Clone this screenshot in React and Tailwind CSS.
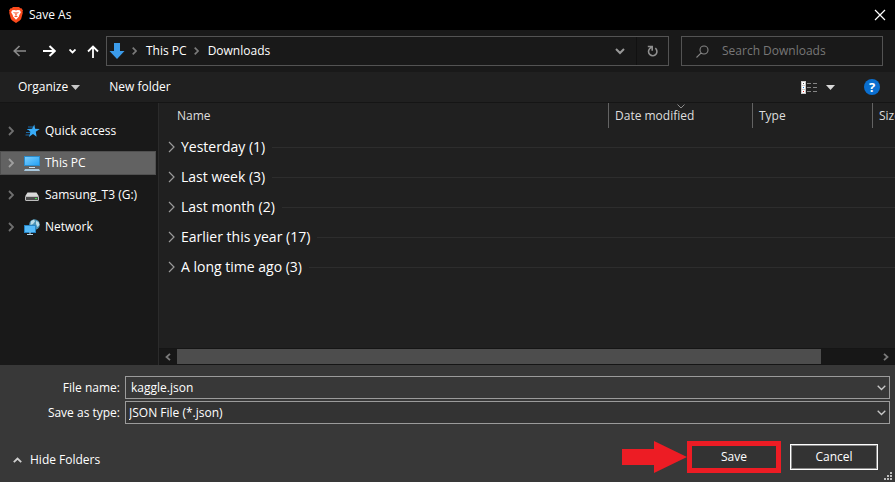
import React from "react";

function Stroke({ d, w = 12, h = 12, sw = 1.5, className = "" }) {
  return (
    <svg width={w} height={h} viewBox={`0 0 ${w} ${h}`} fill="none" stroke="currentColor" strokeWidth={sw} className={`shrink-0 ${className}`} aria-hidden="true">
      <path d={d} />
    </svg>
  );
}

function BraveLogo() {
  return (
    <svg width="14" height="16" viewBox="0 0 14 16" className="shrink-0" aria-hidden="true">
      <path d="M4 0h6l1.3 1.3 1.2-.1L14 3.4l-.5 1.3.3 1.1-1.7 6.2-1.3 1.6L7 16l-3.800-2.400L1.900 12 .2 5.800l.3-1.100L0 3.400l1.500-2.200 1.200.1z" fill="#fb4a1c" />
      <path d="M3.200 3.200l2-.3L7 3.400l1.800-.5 2 .3 1.100 2.100-1.700 3-.2 1.100L7 12.700 4 9.400l-.2-1.100-1.700-3z" fill="#fff" />
      <path d="M4 5l2 .6-.5 1.200zM10 5l-2 .6.500 1.200zM6.500 5h1l.2 2.800L7 8.500l-.7-.7zM5 9.200l2-.6 2 .6-2 1z" fill="#fb4a1c" />
    </svg>
  );
}

function DownloadsIcon() {
  return (
    <svg width="16" height="16" viewBox="0 0 16 16" className="shrink-0" aria-hidden="true">
      <path d="M5 0h6v8h4.500L8 16 .5 8H5z" fill="#3b9bea" />
    </svg>
  );
}

function StarIcon() {
  return (
    <svg width="16" height="16" viewBox="0 0 16 16" className="shrink-0" aria-hidden="true">
      <path d="M4 4h5M3 6.500h5M2 9.500h5M1.500 12h4" stroke="#1a6aa8" />
      <path d="M10.300 1.500l.8 4.300 4.700.2-4 2.700.8 5-3.600-2.800-4.200 3 1.700-4.900L3.500 6l4.600-.2z" fill="#38acf8" />
    </svg>
  );
}

function PcIcon() {
  return (
    <svg width="16" height="16" viewBox="0 0 16 16" className="shrink-0" aria-hidden="true">
      <defs>
        <linearGradient id="pcScreen" x1="0" y1="0" x2="1" y2="1">
          <stop offset="0" stopColor="#7fd0ff" />
          <stop offset="1" stopColor="#22a1f5" />
        </linearGradient>
      </defs>
      <rect x=".5" y="1.500" width="15" height="9" fill="url(#pcScreen)" stroke="#2b8ccc" />
      <path d="M5 12.500h6" stroke="#c9dce8" />
      <path d="M1 14h14l1 2H0z" fill="#a8c9df" />
    </svg>
  );
}

function DriveIcon() {
  return (
    <svg width="16" height="16" viewBox="0 0 16 16" className="shrink-0" aria-hidden="true">
      <path d="M3.500 5.500h9L15 9.500H1z" fill="#d9d9d9" />
      <rect x="1.500" y="9.500" width="13" height="4" rx=".5" fill="#4d4d4d" stroke="#bdbdbd" />
      <rect x="11" y="11" width="2" height="1" fill="#3fe04a" />
    </svg>
  );
}

function NetworkIcon() {
  return (
    <svg width="16" height="16" viewBox="0 0 16 16" className="shrink-0" aria-hidden="true">
      <circle cx="10.500" cy="5.500" r="5.300" fill="#4b93b5" />
      <path d="M7 2l3-1.500 1 2L9 5 6.500 6zM12 2l2.500 1L15.500 6l-2 2-1.500-3z" fill="#b9dce8" />
      <rect x=".5" y="6.500" width="11" height="7" fill="#55bbfa" stroke="#2684c4" />
      <path d="M6 13v2M3 15.500h6" stroke="#b5d3e5" />
    </svg>
  );
}

function ViewIcon() {
  return (
    <svg width="17" height="13" viewBox="0 0 17 13" className="shrink-0" aria-hidden="true">
      <path d="M0 0h5v13H0z" fill="#c9c9c9" />
      <path d="M1 1h3v3H1zM1 5h3v3H1zM1 9h3v3H1z" fill="#fff" />
      <path d="M2 2h1v1H2z" fill="#555" />
      <path d="M2 6h1v1H2z" fill="#1683e0" />
      <path d="M2 10h1v1H2z" fill="#d22" />
      <path d="M6 2.500h4M12 2.500h4M6 6.500h4M12 6.500h4M6 10.500h4M12 10.500h4" stroke="#858585" />
    </svg>
  );
}

const places = [
  { name: "Quick access", icon: <StarIcon /> },
  { name: "This PC", icon: <PcIcon />, selected: true },
  { name: "Samsung_T3 (G:)", icon: <DriveIcon /> },
  { name: "Network", icon: <NetworkIcon /> },
];

const groups = ["Yesterday (1)", "Last week (3)", "Last month (2)", "Earlier this year (17)", "A long time ago (3)"];

function TitleBar() {
  return (
    <header className="flex h-[30px] items-center justify-between bg-black pr-[7px] pl-[9px]">
      <div className="flex items-center gap-[6px]">
        <BraveLogo />
        <h1>Save As</h1>
      </div>
      <button aria-label="Close" className="flex size-4 items-center justify-center">
        <Stroke d="M1 1l10 10M11 1L1 11" sw={1.2} />
      </button>
    </header>
  );
}

function NavBar() {
  return (
    <nav className="flex h-[42px] items-center bg-[#191919] pr-3 pl-[13px]">
      <button aria-label="Back" className="text-[#8a8a8a]">
        <Stroke w={13} d="M13 6H1M6.500 1L1.300 6l5.200 5" sw={1.700} />
      </button>
      <button aria-label="Forward" className="ml-[17px]">
        <Stroke w={13} d="M0 6h12M6.500 1l5.200 5-5.200 5" sw={2} />
      </button>
      <button aria-label="Recent locations" className="ml-[13px]">
        <Stroke w={7} h={5} d="M.5.5l3 3 3-3" sw={1.800} />
      </button>
      <button aria-label="Up" className="ml-[11px]">
        <Stroke h={13} d="M6 13V1M1 6.500l5-5 5 5" sw={1.800} />
      </button>
      <div className="ml-[7px] flex h-[30px] flex-1 items-center border border-[#535353] pl-[2px]">
        <DownloadsIcon />
        <Stroke w={5} h={8} d="M.7.7L4 4 .7 7.300" sw={1.700} className="ml-[7px] text-[#7a7a7a]" />
        <button className="ml-[9px]">This PC</button>
        <Stroke w={5} h={8} d="M.7.7L4 4 .7 7.300" sw={1.700} className="ml-[7px] text-[#7a7a7a]" />
        <button className="ml-[9px]">Downloads</button>
        <button aria-label="Previous locations" className="mr-[11px] ml-auto text-[#989898]">
          <Stroke w={10} h={7} d="M1 1l4 4 4-4" sw={2} />
        </button>
        <button aria-label="Refresh" className="flex h-full w-[32px] items-center justify-center border-l border-[#111] text-[#8f8f8f]">
          <Stroke w={11} h={12} d="M8.300 3.200A4.200 4.200 0 1 1 2.600 3.700L4.700 1.800M.8 1.500h4.400v4.300" sw={1.600} />
        </button>
      </div>
      <label className="ml-3 flex h-[30px] w-[202px] items-center gap-[13px] border border-[#535353] pl-[14px] text-[#858585]">
        <Stroke w={13} h={13} d="M12 5A4 4 0 1 1 4 5a4 4 0 0 1 8 0M5.200 7.800L.5 12.500" sw={1.100} />
        <input aria-label="Search Downloads" placeholder="Search Downloads" className="w-full min-w-0 bg-transparent outline-none placeholder:text-[#777]" />
      </label>
    </nav>
  );
}

function Toolbar() {
  return (
    <div className="flex h-[31px] items-center border-b border-[#151515] bg-[#202020] pr-[15px] pl-[18px]">
      <button className="flex items-center gap-[3px]">
        Organize
        <svg width="9" height="5" viewBox="0 0 9 5" aria-hidden="true"><path d="M0 0h9L4.500 5z" fill="#c8c8c8" /></svg>
      </button>
      <button className="ml-[29px]">New folder</button>
      <button aria-label="Change your view" className="ml-auto flex items-center gap-[8px]">
        <ViewIcon />
        <svg width="9" height="5" viewBox="0 0 9 5" aria-hidden="true"><path d="M0 0h9L4.500 5z" fill="#d8d8d8" /></svg>
      </button>
      <button aria-label="Help" className="ml-[29px] flex size-4 items-center justify-center rounded-full bg-[#0a6fd0] text-[13px] font-bold">?</button>
    </div>
  );
}

function Sidebar() {
  return (
    <aside className="w-[159px] shrink-0 border-r border-[#2b2b2b] bg-[#191919] pt-4 pr-[2px]">
      <ul className="flex flex-col gap-2">
        {places.map((p) => (
          <li key={p.name}>
            <button className={`flex h-6 w-full items-center border pl-[7px] ${p.selected ? "border-[#505050] bg-[#626262]" : "border-transparent"}`}>
              <Stroke w={6} h={10} d="M1 1l4 4-4 4" sw={1.800} className={p.selected ? "text-[#a0a0a0]" : "text-[#707070]"} />
              <span className="mr-[5px] ml-[10px]">{p.icon}</span>
              {p.name}
            </button>
          </li>
        ))}
      </ul>
    </aside>
  );
}

function FileList() {
  return (
    <main className="flex min-w-0 flex-1 flex-col bg-[#202020] text-[#dedede]">
      <div className="flex h-[25px] overflow-hidden leading-[25px]">
        <div className="flex-1 pl-[18px]">Name</div>
        <div className="relative w-[144px] shrink-0 border-l border-[#636363] pl-[6px]">
          Date modified
          <Stroke w={8} h={5} d="M.5.5L4 4 7.500.5" sw={1} className="absolute top-px left-[68px] text-[#8c8c8c]" />
        </div>
        <div className="w-[120px] shrink-0 border-l border-[#636363] pl-[6px]">Type</div>
        <div className="w-[23px] shrink-0 border-l border-[#636363] pl-[6px]">Size</div>
      </div>
      <ul className="mt-1 flex-1 text-[14px] text-white">
        {groups.map((g) => (
          <li key={g} className="flex h-[30px] items-center pl-[9px]">
            <Stroke w={7} h={12} d="M1 1l5 5-5 5" sw={1.200} className="text-[#9a9a9a]" />
            <button className="ml-[6px]">{g}</button>
            <span className="ml-[7px] h-px flex-1 bg-[#2d2d2d]" />
          </li>
        ))}
      </ul>
      <div className="flex h-[17px] items-center border-y border-[#151515] bg-[#171717] text-[#7a7a7a]">
        <button aria-label="Scroll left" className="flex w-[18px] justify-center"><Stroke w={6} h={8} d="M5 .8L1.500 4 5 7.200" sw={1.800} /></button>
        <div className="h-full flex-1"><div className="h-full w-[92%] bg-[#4d4d4d]" /></div>
        <button aria-label="Scroll right" className="flex w-[18px] justify-center"><Stroke w={6} h={8} d="M1 .8L4.500 4 1 7.200" sw={1.800} /></button>
      </div>
    </main>
  );
}

function Footer() {
  return (
    <footer className="relative bg-[#383838] pt-[11px] pb-[9px]">
      <form className="flex flex-col gap-[2px] pr-[5px]">
        <div className="flex items-center">
          <label htmlFor="fileName" className="w-[125px] shrink-0 pr-[5px] text-right">File name:</label>
          <div className="flex h-[23px] flex-1 items-center border border-[#9b9b9b] pr-[3px]">
            <input id="fileName" defaultValue="kaggle.json" className="min-w-0 flex-1 bg-transparent pl-[5px] outline-none" />
            <button type="button" aria-label="Show file names" className="text-[#c8c8c8]"><Stroke w={9} h={6} d="M.7.7l3.800 3.800L8.300.7" sw={1.300} /></button>
          </div>
        </div>
        <div className="flex items-center">
          <label htmlFor="fileType" className="w-[125px] shrink-0 pr-[5px] text-right">Save as type:</label>
          <div className="grid h-[23px] flex-1 items-center border border-[#9b9b9b] bg-[#333]">
            <select id="fileType" className="col-start-1 row-start-1 w-full appearance-none bg-transparent pl-[3px] outline-none">
              <option>JSON File (*.json)</option>
            </select>
            <Stroke w={9} h={6} d="M.7.7l3.800 3.800L8.300.7" sw={1.300} className="pointer-events-none col-start-1 row-start-1 mr-[3px] justify-self-end text-[#c8c8c8]" />
          </div>
        </div>
      </form>
      <div className="mt-[17px] flex items-center pr-[17px] pl-[13px]">
        <button className="mt-[5px] flex items-center gap-2">
          <Stroke w={9} h={6} d="M.8 5.200l3.700-3.700 3.700 3.700" sw={1.800} className="text-[#d0d0d0]" />
          Hide Folders
        </button>
        <svg width="65" height="32" viewBox="0 0 65 32" className="ml-auto" aria-hidden="true"><path d="M0 8h32V0l33 16-33 16v-8H0z" fill="#ed1c24" /></svg>
        <button className="h-8 w-[94px] border-[5px] border-[#ed1c24] bg-[#333]">Save</button>
        <button className="ml-[9px] h-[26px] w-[88px] border border-white bg-[#333] ring-1 ring-[#8b8b8b] ring-inset">Cancel</button>
      </div>
      <svg width="8" height="8" viewBox="0 0 8 8" className="absolute right-[3px] bottom-[2px]" aria-hidden="true">
        <path d="M6 0h2v2H6zM3 3h2v2H3zM6 3h2v2H6zM0 6h2v2H0zM3 6h2v2H3zM6 6h2v2H6z" fill="#bdbdbd" />
      </svg>
    </footer>
  );
}

export default function App() {
  return (
    <div className="flex min-h-screen flex-col bg-[#383838] font-['Open_Sans','Noto_Sans',sans-serif] text-[12px] leading-4 text-white">
      <TitleBar />
      <NavBar />
      <Toolbar />
      <div className="flex min-h-[262px] flex-1">
        <Sidebar />
        <FileList />
      </div>
      <Footer />
    </div>
  );
}
